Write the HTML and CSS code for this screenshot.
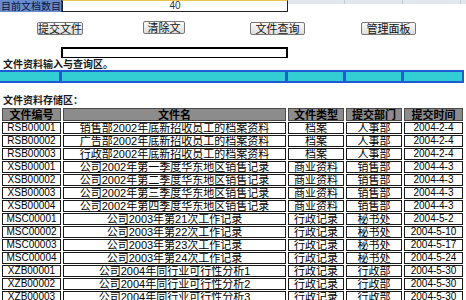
FILE: index.html
```html
<!DOCTYPE html>
<html lang="zh-CN">
<head>
    <meta charset="UTF-8">
    <title>文件资料管理</title>
    <link rel="stylesheet" href="styles.css">
</head>
<body>
    <div class="count-row">
        <span class="count-label">目前文档数目</span>
        <span class="count-value">40</span>
        <div class="count-rest">
            <span class="rest-cell rest-wide"></span>
            <span class="rest-cell"></span>
            <span class="rest-cell"></span>
        </div>
    </div>

    <div class="button-row">
        <div><button class="btn btn-submit">提交文件</button></div>
        <div><button class="btn btn-clear">清除文</button></div>
        <div><button class="btn">文件查询</button></div>
        <div><button class="btn">管理面板</button></div>
    </div>

    <div class="query-box"></div>

    <div class="section-title">文件资料输入与查询区。</div>
    <div class="input-strip">
        <span class="strip-cell c1"></span>
        <span class="strip-cell c2"></span>
        <span class="strip-cell c3"></span>
        <span class="strip-cell c4"></span>
        <span class="strip-cell c5"></span>
    </div>

    <div class="section-title store-title">文件资料存储区：</div>
    <table class="files">
        <colgroup>
            <col class="w-code"><col class="w-name"><col class="w-type"><col class="w-dept"><col class="w-date">
        </colgroup>
        <thead>
            <tr><th>文件编号</th><th>文件名</th><th>文件类型</th><th>提交部门</th><th>提交时间</th></tr>
        </thead>
        <tbody>
            <tr><td>RSB00001</td><td>销售部2002年底新招收员工的档案资料</td><td>档案</td><td>人事部</td><td>2004-2-4</td></tr>
            <tr><td>RSB00002</td><td>广告部2002年底新招收员工的档案资料</td><td>档案</td><td>人事部</td><td>2004-2-4</td></tr>
            <tr><td>RSB00003</td><td>行政部2002年底新招收员工的档案资料</td><td>档案</td><td>人事部</td><td>2004-2-4</td></tr>
            <tr><td>XSB00001</td><td>公司2002年第一季度华东地区销售记录</td><td>商业资料</td><td>销售部</td><td>2004-4-3</td></tr>
            <tr><td>XSB00002</td><td>公司2002年第二季度华东地区销售记录</td><td>商业资料</td><td>销售部</td><td>2004-4-3</td></tr>
            <tr><td>XSB00003</td><td>公司2002年第三季度华东地区销售记录</td><td>商业资料</td><td>销售部</td><td>2004-4-3</td></tr>
            <tr><td>XSB00004</td><td>公司2002年第四季度华东地区销售记录</td><td>商业资料</td><td>销售部</td><td>2004-4-3</td></tr>
            <tr><td>MSC00001</td><td>公司2003年第21次工作记录</td><td>行政记录</td><td>秘书处</td><td>2004-5-2</td></tr>
            <tr><td>MSC00002</td><td>公司2003年第22次工作记录</td><td>行政记录</td><td>秘书处</td><td>2004-5-10</td></tr>
            <tr><td>MSC00003</td><td>公司2003年第23次工作记录</td><td>行政记录</td><td>秘书处</td><td>2004-5-17</td></tr>
            <tr><td>MSC00004</td><td>公司2003年第24次工作记录</td><td>行政记录</td><td>秘书处</td><td>2004-5-24</td></tr>
            <tr><td>XZB00001</td><td>公司2004年同行业可行性分析1</td><td>行政记录</td><td>行政部</td><td>2004-5-30</td></tr>
            <tr><td>XZB00002</td><td>公司2004年同行业可行性分析2</td><td>行政记录</td><td>行政部</td><td>2004-5-30</td></tr>
            <tr><td>XZB00003</td><td>公司2004年同行业可行性分析3</td><td>行政记录</td><td>行政部</td><td>2004-5-30</td></tr>
        </tbody>
    </table>
</body>
</html>
```

FILE: styles.css
```css
* {
    box-sizing: border-box;
}

body {
    margin: 0;
    background-color: #fff;
    color: #000;
    font-family: "Liberation Sans", "Noto Sans CJK SC", sans-serif;
    font-size: 11px;
}

.count-row {
    display: flex;
    height: 12px;
}

.count-label {
    width: 62px;
    flex-shrink: 0;
    background-color: #6a8bcb;
    color: #0a1440;
    font-family: "Noto Sans CJK SC", sans-serif;
    font-size: 10px;
    line-height: 12px;
    padding-left: 1px;
    white-space: nowrap;
    border-right: 1px solid #2a3f78;
}

.count-value {
    width: 226px;
    flex-shrink: 0;
    border: 1px solid #222;
    border-top: 1px solid #e8c84a;
    text-align: center;
    font-size: 10px;
    line-height: 10px;
    color: #333;
}

.count-rest {
    flex: 1;
    display: flex;
    height: 4px;
    background-color: #e2e8ef;
}

.rest-cell {
    width: 58px;
    border-right: 1px solid #c4ccd6;
}

.rest-wide {
    width: 57px;
}

.button-row {
    display: grid;
    grid-template-columns: 106px 107px 111px auto;
    padding-left: 37px;
    margin-top: 10px;
}

.btn {
    width: 55px;
    height: 13px;
    padding: 0;
    font-family: "Noto Sans CJK SC", sans-serif;
    font-size: 11px;
    line-height: 11px;
    color: #111;
    background: linear-gradient(#fafafa, #dedede);
    border: 1px solid #777;
    border-radius: 2px;
}

.btn-submit {
    width: 46px;
}

.btn-clear {
    width: 42px;
    margin-top: -1px;
}

.query-box {
    margin: 12px 0 0 61px;
    width: 227px;
    height: 11px;
    border: 2px solid #000;
    border-bottom-width: 1px;
}

.section-title {
    height: 12px;
    padding-left: 3px;
    font-family: "Noto Sans CJK SC", sans-serif;
    font-size: 10px;
    line-height: 12px;
    font-weight: 700;
    color: #1a1a1a;
}

.store-title {
    margin-top: 11px;
    height: 12px;
}

.input-strip {
    display: flex;
    height: 13px;
    width: 464px;
}

.strip-cell {
    background-color: #33cdd4;
    border: 2px solid #1d5ad4;
    border-left-width: 1px;
}

.c1 { width: 61px; border-left-width: 0; }
.c2 { width: 226px; }
.c3 { width: 58px; }
.c4 { width: 58px; }
.c5 { width: 61px; }

.files {
    border-collapse: separate;
    border-spacing: 2px 1px;
    table-layout: fixed;
    width: 465px;
    margin-top: 1px;
}

.w-code { width: 59px; }
.w-name { width: 223px; }
.w-type { width: 56px; }
.w-dept { width: 56px; }
.w-date { width: 59px; }

.files th {
    height: 13px;
    padding: 0;
    background-color: #8c8c8c;
    border: 1px solid #4a4a4a;
    font-family: "Noto Sans CJK SC", sans-serif;
    font-size: 11px;
    line-height: 11px;
    font-weight: 700;
    color: #000;
    text-align: center;
}

.files td {
    height: 12px;
    padding: 0;
    border: 1px solid #1a1a1a;
    background-color: #fff;
    font-size: 11px;
    line-height: 10px;
    text-align: center;
    white-space: nowrap;
    overflow: hidden;
}

.files td:first-child,
.files td:last-child {
    font-size: 10px;
}
```
